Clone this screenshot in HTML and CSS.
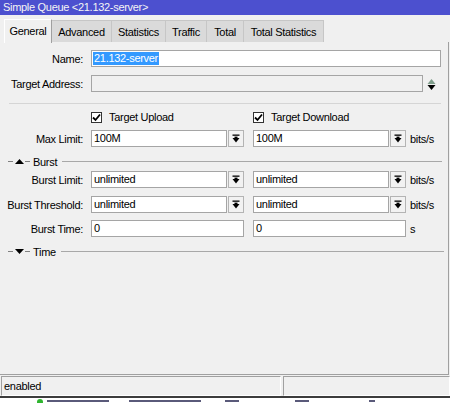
FILE: index.html
```html
<!DOCTYPE html>
<html>
<head>
<meta charset="utf-8">
<link rel="stylesheet" href="styles.css">
</head>
<body>
<div class="window">
  <div class="titlebar">Simple Queue &lt;21.132-server&gt;</div>
  <div class="tabs">
    <div class="tab sel w-general">General</div>
    <div class="tab w-adv">Advanced</div>
    <div class="tab w-stat">Statistics</div>
    <div class="tab w-traffic">Traffic</div>
    <div class="tab w-total">Total</div>
    <div class="tab w-tstat">Total Statistics</div>
  </div>
  <div class="panel">
    <div class="row first">
      <div class="label">Name:</div>
      <div class="input wide"><span class="selected">21.132-server</span></div>
    </div>
    <div class="row gap8">
      <div class="label">Target Address:</div>
      <div class="input target disabled"></div>
      <svg class="updown" width="9" height="13" viewBox="0 0 9 13">
        <polygon points="0.5,6 4.5,1 8.5,6" fill="#7f9e8c"/>
        <polygon points="0.5,7 8.5,7 4.5,12" fill="#000"/>
      </svg>
    </div>
    <div class="sep"></div>
    <div class="checkrow">
      <div class="check c1">
        <span class="box"><svg width="9" height="9" viewBox="0 0 9 9"><path d="M1 4.5 L3.5 7 L8 1.5" stroke="#000" stroke-width="1.8" fill="none"/></svg></span>
        <span>Target Upload</span>
      </div>
      <div class="check">
        <span class="box"><svg width="9" height="9" viewBox="0 0 9 9"><path d="M1 4.5 L3.5 7 L8 1.5" stroke="#000" stroke-width="1.8" fill="none"/></svg></span>
        <span>Target Download</span>
      </div>
    </div>
    <div class="row gap6">
      <div class="label">Max Limit:</div>
      <div class="input half">100M</div>
      <div class="btn"><svg width="8" height="9" viewBox="0 0 8 9"><rect x="0.5" y="0.5" width="7" height="1.3" fill="#000"/><polygon points="0.5,4 7.5,4 4,8.5" fill="#000"/><rect x="2.5" y="2.6" width="3" height="2" fill="#000"/></svg></div>
      <div class="input half second">100M</div>
      <div class="btn"><svg width="8" height="9" viewBox="0 0 8 9"><rect x="0.5" y="0.5" width="7" height="1.3" fill="#000"/><polygon points="0.5,4 7.5,4 4,8.5" fill="#000"/><rect x="2.5" y="2.6" width="3" height="2" fill="#000"/></svg></div>
      <div class="unit">bits/s</div>
    </div>
    <div class="group g-burst">
      <span class="dash"></span>
      <svg class="tri" width="9" height="5" viewBox="0 0 9 5"><polygon points="0,5 9,5 4.5,0" fill="#000"/></svg>
      <span class="dash"></span>
      <span class="gtitle">Burst</span>
      <span class="gline"></span>
    </div>
    <div class="row gap3">
      <div class="label">Burst Limit:</div>
      <div class="input half">unlimited</div>
      <div class="btn"><svg width="8" height="9" viewBox="0 0 8 9"><rect x="0.5" y="0.5" width="7" height="1.3" fill="#000"/><polygon points="0.5,4 7.5,4 4,8.5" fill="#000"/><rect x="2.5" y="2.6" width="3" height="2" fill="#000"/></svg></div>
      <div class="input half second">unlimited</div>
      <div class="btn"><svg width="8" height="9" viewBox="0 0 8 9"><rect x="0.5" y="0.5" width="7" height="1.3" fill="#000"/><polygon points="0.5,4 7.5,4 4,8.5" fill="#000"/><rect x="2.5" y="2.6" width="3" height="2" fill="#000"/></svg></div>
      <div class="unit">bits/s</div>
    </div>
    <div class="row gap8">
      <div class="label">Burst Threshold:</div>
      <div class="input half">unlimited</div>
      <div class="btn"><svg width="8" height="9" viewBox="0 0 8 9"><rect x="0.5" y="0.5" width="7" height="1.3" fill="#000"/><polygon points="0.5,4 7.5,4 4,8.5" fill="#000"/><rect x="2.5" y="2.6" width="3" height="2" fill="#000"/></svg></div>
      <div class="input half second">unlimited</div>
      <div class="btn"><svg width="8" height="9" viewBox="0 0 8 9"><rect x="0.5" y="0.5" width="7" height="1.3" fill="#000"/><polygon points="0.5,4 7.5,4 4,8.5" fill="#000"/><rect x="2.5" y="2.6" width="3" height="2" fill="#000"/></svg></div>
      <div class="unit">bits/s</div>
    </div>
    <div class="row gap7">
      <div class="label">Burst Time:</div>
      <div class="input full">0</div>
      <div class="input full second">0</div>
      <div class="unit">s</div>
    </div>
    <div class="group g-time">
      <span class="dash"></span>
      <svg class="tri" width="9" height="5" viewBox="0 0 9 5"><polygon points="0,0 9,0 4.5,5" fill="#000"/></svg>
      <span class="dash"></span>
      <span class="gtitle">Time</span>
      <span class="gline"></span>
    </div>
  </div>
  <div class="statusbar">
    <div class="cell cell1">enabled</div>
    <div class="cell cell2"></div>
  </div>
  <div class="behind">
    <div class="frag">
      <span class="dot"></span>
      <span class="fbar b1"></span>
      <span class="fbar b2"></span>
      <span class="fbar b3"></span>
      <span class="fbar b4"></span>
      <span class="fbar b5"></span>
    </div>
  </div>
</div>
</body>
</html>
```

FILE: styles.css
```css
html, body {
  margin: 0;
  padding: 0;
}
body {
  width: 450px;
  height: 403px;
  overflow: hidden;
  background: #f0f0f0;
  font-family: "Liberation Sans", Arial, sans-serif;
  font-size: 11px;
  letter-spacing: -0.3px;
  color: #000;
}
.window {
  width: 450px;
  height: 403px;
  display: flex;
  flex-direction: column;
}
.titlebar {
  height: 15px;
  line-height: 15px;
  background: #4c50cf;
  color: #f4f4f4;
  padding-left: 3px;
  font-size: 11px;
  white-space: nowrap;
}
.tabs {
  height: 27px;
  display: flex;
  align-items: flex-end;
  padding-left: 4px;
  box-sizing: border-box;
}
.tab {
  height: 22px;
  box-sizing: border-box;
  background: #dadada;
  border: 1px solid #c6c6c6;
  border-bottom: none;
  border-left: none;
  text-align: center;
  line-height: 22px;
  white-space: nowrap;
}
.tab.sel {
  height: 24px;
  margin-bottom: -1px;
  background: #f0f0f0;
  border-top: 1px solid #ffffff;
  border-left: 1px solid #ffffff;
  border-right: 1px solid #a0a0a0;
  line-height: 22px;
  position: relative;
  z-index: 1;
}
.w-general { width: 48px; }
.w-adv { width: 60px; }
.w-stat { width: 54px; }
.w-traffic { width: 41px; }
.w-total { width: 37px; }
.w-tstat { width: 80px; }

.panel {
  width: 449px;
  height: 333px;
  box-sizing: border-box;
  border-right: 1px solid #a0a0a0;
  border-bottom: 1px solid #a0a0a0;
  padding-top: 8px;
  display: flex;
  flex-direction: column;
}
.row {
  height: 17px;
  display: flex;
  align-items: center;
  flex: none;
}
.gap8 { margin-top: 8px; }
.gap7 { margin-top: 7px; }
.gap6 { margin-top: 6px; }
.gap3 { margin-top: 3px; }
.label {
  width: 83px;
  margin-right: 8px;
  text-align: right;
  white-space: nowrap;
}
.input {
  height: 17px;
  box-sizing: border-box;
  border: 1px solid #a5a5a5;
  background: #ffffff;
  padding-left: 2px;
  line-height: 15px;
  white-space: nowrap;
  overflow: hidden;
}
.input.wide { width: 350px; padding-left: 1px; }
.input.target { width: 332px; }
.input.disabled { background: #f0f0f0; }
.input.half { width: 136px; }
.input.full { width: 153px; }
.input.second { margin-left: 9px; }
.btn + .input.second { margin-left: 9px; }
.selected {
  background: #3399ff;
  color: #ffffff;
  display: inline-block;
  height: 13px;
  line-height: 13px;
  padding: 0 1px;
  margin-top: 1px;
  vertical-align: top;
}
.updown {
  margin-left: 4px;
  margin-top: 1px;
}
.btn {
  width: 16px;
  height: 17px;
  margin-left: 1px;
  box-sizing: border-box;
  border: 1px solid #b4b4b4;
  background: #f2f2f2;
  display: flex;
  align-items: center;
  justify-content: center;
}
.unit {
  margin-left: 4px;
  white-space: nowrap;
}
.sep {
  margin-top: 11px;
  margin-left: 9px;
  width: 432px;
  height: 1px;
  background: #d5d5d5;
  flex: none;
}
.checkrow {
  margin-top: 6px;
  height: 14px;
  display: flex;
  align-items: center;
  padding-left: 91px;
  flex: none;
}
.check {
  display: flex;
  align-items: center;
  white-space: nowrap;
}
.check.c1 { width: 162px; }
.box {
  width: 11px;
  height: 11px;
  box-sizing: border-box;
  border: 1px solid #333333;
  background: #ffffff;
  margin-right: 7px;
  display: flex;
  align-items: center;
  justify-content: center;
}
.group {
  height: 13px;
  display: flex;
  align-items: center;
  flex: none;
  margin-top: 8px;
  padding-left: 8px;
}
.dash {
  width: 5px;
  height: 1px;
  background: #808080;
}
.tri { margin: 0 1px 0 2px; }
.gtitle {
  margin-left: 3px;
  margin-right: 5px;
  white-space: nowrap;
}
.gline {
  width: 380px;
  height: 1px;
  background: #a8a8a8;
}
.g-time .gline { width: 383px; }

.statusbar {
  margin-top: 1px;
  height: 20px;
  display: flex;
  flex: none;
}
.cell {
  height: 20px;
  box-sizing: border-box;
  border-top: 1px solid #a0a0a0;
  border-left: 1px solid #a0a0a0;
  border-bottom: 1px solid #ffffff;
  border-right: 1px solid #ffffff;
  line-height: 18px;
  padding-left: 2px;
}
.cell1 { width: 280px; margin-left: 1px; }
.cell2 { width: 167px; margin-left: 2px; }
.behind {
  flex: 1;
  border-top: 2px solid #3c3c3c;
  background: #ffffff;
  overflow: hidden;
}
.frag {
  display: flex;
  align-items: flex-start;
  height: 5px;
  overflow: hidden;
  padding-top: 1px;
}
.dot {
  width: 6px;
  height: 6px;
  border-radius: 3px;
  background: #2fb52f;
  margin-left: 37px;
}
.fbar {
  height: 2px;
  margin-top: 1px;
  background: #5a5a7a;
}
.b1 { margin-left: 4px; width: 62px; }
.b2 { margin-left: 20px; width: 72px; }
.b3 { margin-left: 24px; width: 14px; }
.b4 { margin-left: 56px; width: 14px; }
.b5 { margin-left: 60px; width: 6px; }
```
